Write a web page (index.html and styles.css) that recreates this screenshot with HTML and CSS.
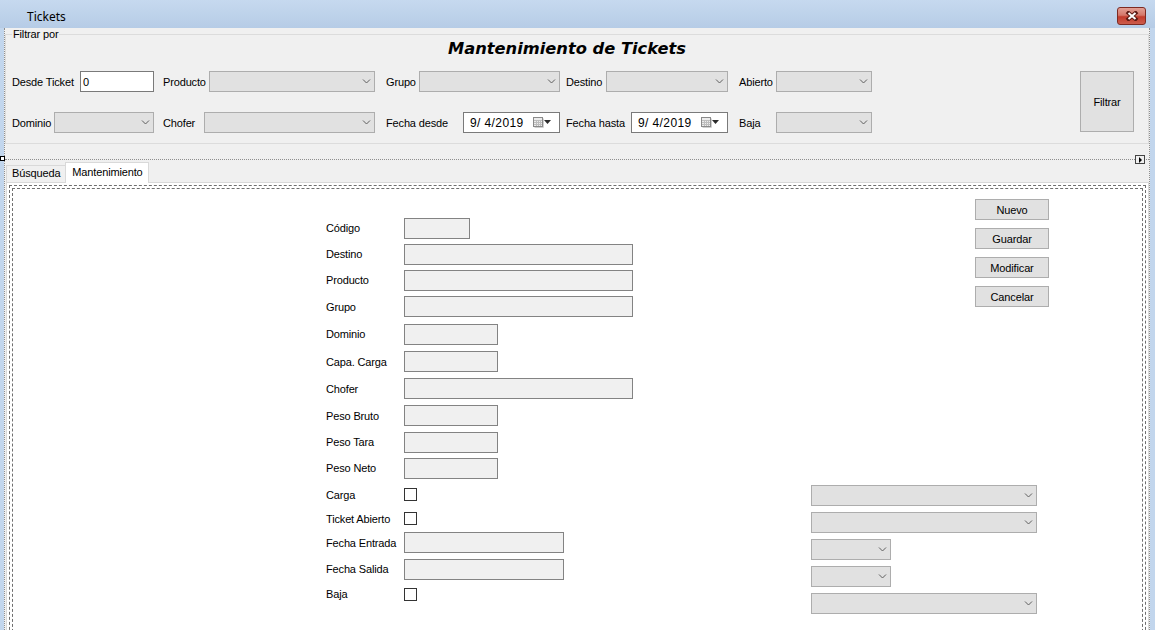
FILE: index.html
```html
<!DOCTYPE html>
<html lang="es">
<head>
    <meta charset="UTF-8">
    <title>Tickets</title>
    <link rel="stylesheet" href="styles.css">
</head>
<body>
    <div class="titlebar">
        <span class="title">Tickets</span>
        <button class="close-btn">
            <svg width="14" height="10" viewBox="0 0 14 10">
                <path d="M3.5 2 L10.5 8 M10.5 2 L3.5 8" stroke="#5b1a14" stroke-width="4" stroke-linecap="square"/>
                <path d="M3.5 2 L10.5 8 M10.5 2 L3.5 8" stroke="#fff" stroke-width="2"/>
            </svg>
        </button>
    </div>

    <div class="client">
        <fieldset class="filter">
            <legend>Filtrar por</legend>
            <h1 class="form-title">Mantenimiento de Tickets</h1>

            <div class="filter-body">
                <div class="filter-grid">
                    <div class="fcell"><span>Desde Ticket</span><input class="textbox w74" value="0"></div>
                    <div class="fcell"><span>Producto</span><div class="combo w166"><svg viewBox="0 0 9 5"><path d="M1 0.5 L4.5 4 L8 0.5"/></svg></div></div>
                    <div class="fcell"><span>Grupo</span><div class="combo w141"><svg viewBox="0 0 9 5"><path d="M1 0.5 L4.5 4 L8 0.5"/></svg></div></div>
                    <div class="fcell"><span>Destino</span><div class="combo w122"><svg viewBox="0 0 9 5"><path d="M1 0.5 L4.5 4 L8 0.5"/></svg></div></div>
                    <div class="fcell"><span>Abierto</span><div class="combo w96"><svg viewBox="0 0 9 5"><path d="M1 0.5 L4.5 4 L8 0.5"/></svg></div></div>

                    <div class="fcell"><span>Dominio</span><div class="combo w100"><svg viewBox="0 0 9 5"><path d="M1 0.5 L4.5 4 L8 0.5"/></svg></div></div>
                    <div class="fcell"><span>Chofer</span><div class="combo w171"><svg viewBox="0 0 9 5"><path d="M1 0.5 L4.5 4 L8 0.5"/></svg></div></div>
                    <div class="fcell"><span>Fecha desde</span>
                        <div class="datepick w97"><span class="date">9/ 4/2019</span>
                            <svg width="18" height="12" viewBox="0 0 18 12">
                                <rect x="0.5" y="0.5" width="9" height="9" fill="#ececec" stroke="#8a8a8a"/>
                                <path d="M1 3.5h8 M1 5.5h8 M1 7.5h8 M3.5 3v6 M5.5 3v6 M7.5 3v6" stroke="#bdbdbd"/>
                                <path d="M10.5 1.5v9 M1.5 10.5h9" stroke="#d0d0d0"/>
                                <path d="M11 3h7l-3.5 4z" fill="#2a2a2a"/>
                            </svg>
                        </div>
                    </div>
                    <div class="fcell"><span>Fecha hasta</span>
                        <div class="datepick w97"><span class="date">9/ 4/2019</span>
                            <svg width="18" height="12" viewBox="0 0 18 12">
                                <rect x="0.5" y="0.5" width="9" height="9" fill="#ececec" stroke="#8a8a8a"/>
                                <path d="M1 3.5h8 M1 5.5h8 M1 7.5h8 M3.5 3v6 M5.5 3v6 M7.5 3v6" stroke="#bdbdbd"/>
                                <path d="M10.5 1.5v9 M1.5 10.5h9" stroke="#d0d0d0"/>
                                <path d="M11 3h7l-3.5 4z" fill="#2a2a2a"/>
                            </svg>
                        </div>
                    </div>
                    <div class="fcell"><span>Baja</span><div class="combo w96"><svg viewBox="0 0 9 5"><path d="M1 0.5 L4.5 4 L8 0.5"/></svg></div></div>
                </div>
                <button class="btn btn-filter">Filtrar</button>
            </div>
        </fieldset>

        <div class="lower">
            <span class="grip-left"></span>
            <span class="grip-right"><i></i></span>

            <div class="tabs">
                <div class="tab-strip">
                    <div class="tab">Búsqueda</div>
                    <div class="tab active">Mantenimiento</div>
                </div>
                <div class="tab-page">
                    <div class="dash-outer">
                        <div class="dash-inner">
                            <div class="page-body">
                                <div class="form-grid">
                                    <span>Código</span><div class="field s"></div>
                                    <span>Destino</span><div class="field xl"></div>
                                    <span>Producto</span><div class="field xl"></div>
                                    <span>Grupo</span><div class="field xl"></div>
                                    <span>Dominio</span><div class="field m"></div>
                                    <span>Capa. Carga</span><div class="field m"></div>
                                    <span>Chofer</span><div class="field xl"></div>
                                    <span>Peso Bruto</span><div class="field m"></div>
                                    <span>Peso Tara</span><div class="field m"></div>
                                    <span>Peso Neto</span><div class="field m"></div>
                                    <span>Carga</span><div class="check"></div>
                                    <span>Ticket Abierto</span><div class="check"></div>
                                    <span>Fecha Entrada</span><div class="field l"></div>
                                    <span>Fecha Salida</span><div class="field l"></div>
                                    <span>Baja</span><div class="check"></div>
                                </div>

                                <div class="side">
                                    <div class="side-buttons">
                                        <button class="btn">Nuevo</button>
                                        <button class="btn">Guardar</button>
                                        <button class="btn">Modificar</button>
                                        <button class="btn">Cancelar</button>
                                    </div>
                                    <div class="side-combos">
                                        <div class="combo wide"><svg viewBox="0 0 9 5"><path d="M1 0.5 L4.5 4 L8 0.5"/></svg></div>
                                        <div class="combo wide"><svg viewBox="0 0 9 5"><path d="M1 0.5 L4.5 4 L8 0.5"/></svg></div>
                                        <div class="combo short"><svg viewBox="0 0 9 5"><path d="M1 0.5 L4.5 4 L8 0.5"/></svg></div>
                                        <div class="combo short"><svg viewBox="0 0 9 5"><path d="M1 0.5 L4.5 4 L8 0.5"/></svg></div>
                                        <div class="combo wide"><svg viewBox="0 0 9 5"><path d="M1 0.5 L4.5 4 L8 0.5"/></svg></div>
                                    </div>
                                </div>
                            </div>
                        </div>
                    </div>
                </div>
            </div>
        </div>
    </div>
</body>
</html>
```

FILE: styles.css
```css
* {
    box-sizing: border-box;
}

html, body {
    margin: 0;
    padding: 0;
}

body {
    width: 1155px;
    height: 630px;
    overflow: hidden;
    background: #c2d6ed;
    font-family: "Liberation Sans", Arial, sans-serif;
    font-size: 11px;
    letter-spacing: -0.15px;
    color: #000;
}

/* window title bar */
.titlebar {
    height: 28px;
    display: flex;
    align-items: flex-start;
    background: linear-gradient(#c6d9ef, #b6cce6);
}

.titlebar .title {
    font-family: "Noto Sans", sans-serif;
    font-size: 12px;
    letter-spacing: 0;
    line-height: 16px;
    margin: 9px 0 0 27px;
}

.close-btn {
    margin: 7px 9px 0 auto;
    width: 29px;
    height: 18px;
    padding: 0;
    border: 1px solid #7d2a22;
    border-radius: 3px;
    background: linear-gradient(#e2a095 0%, #d4776a 45%, #c23b2c 55%, #cc5c4c 100%);
    display: flex;
    align-items: center;
    justify-content: center;
}

/* client area */
.client {
    height: 602px;
    margin: 0 5px 0 4px;
    background: #f0f0f0;
    border-left: 1px dotted #8e8e8e;
    border-right: 1px dotted #8e8e8e;
}

.filter {
    margin: 0;
    min-width: 0;
    border: 1px solid #dcdcdc;
    padding: 0 14px 10px 6px;
}

.filter legend {
    padding: 0 1px;
    line-height: 13px;
    font-size: 11px;
}

.form-title {
    margin: -3px 0 0;
    padding-right: 12px;
    text-align: center;
    letter-spacing: 0;
    font: italic bold 16.3px/22px "DejaVu Sans", sans-serif;
}

.filter-body {
    display: flex;
    margin-top: 11px;
}

.filter-grid {
    display: grid;
    grid-template-columns: 151px 223px 180px 173px 133px;
    grid-template-rows: 21px 21px;
    row-gap: 20px;
}

.fcell {
    display: flex;
    align-items: center;
    justify-content: space-between;
    padding-right: 9px;
}

.fcell:nth-child(5n+2),
.fcell:nth-child(5n+4) {
    padding-right: 11px;
}

.fcell:nth-child(5n+3) {
    padding-right: 6px;
}

.fcell:nth-child(5n) {
    padding-right: 0;
}

.w74 { width: 74px; }
.w96 { width: 96px; }
.w97 { width: 97px; }
.w100 { width: 100px; }
.w122 { width: 122px; }
.w141 { width: 141px; }
.w166 { width: 166px; }
.w171 { width: 171px; }

.textbox {
    height: 21px;
    margin: 0;
    padding: 0 2px;
    border: 1px solid #7a7a7a;
    background: #fff;
    font: 11px "Liberation Sans", Arial, sans-serif;
    color: #000;
    outline: none;
}

.combo {
    height: 21px;
    background: #e1e1e1;
    border: 1px solid #adadad;
    display: flex;
    align-items: center;
    justify-content: flex-end;
    padding-right: 3px;
}

.combo svg {
    width: 9px;
    height: 5px;
    fill: none;
    stroke: #5f5f5f;
    stroke-width: 1;
}

.datepick {
    height: 21px;
    background: #fff;
    border: 1px solid #7a7a7a;
    display: flex;
    align-items: center;
    justify-content: space-between;
    padding: 0 8px 0 6px;
}

.datepick .date {
    font-size: 12px;
    letter-spacing: 0.4px;
    white-space: pre;
}

.btn {
    background: #e1e1e1;
    border: 1px solid #adadad;
    padding: 0;
    font: 11px "Liberation Sans", Arial, sans-serif;
    letter-spacing: -0.15px;
    color: #000;
}

.btn-filter {
    margin-left: auto;
    width: 54px;
    height: 61px;
}

/* lower panel with tabs */
.lower {
    position: relative;
    margin-top: 15px;
    border-top: 1px dotted #8e8e8e;
}

.grip-left {
    position: absolute;
    left: -5px;
    top: -4px;
    width: 5px;
    height: 5px;
    border: 1px solid #000;
    background: #fff;
}

.grip-right {
    position: absolute;
    right: 4px;
    top: -5px;
    width: 10px;
    height: 9px;
    border: 1px solid #444;
    background: #f0f0f0;
    display: flex;
    align-items: center;
    justify-content: center;
}

.grip-right i {
    width: 0;
    height: 0;
    border-left: 3px solid #000;
    border-top: 3px solid transparent;
    border-bottom: 3px solid transparent;
}

.tabs {
    margin-left: 1px;
}

.tab-strip {
    display: flex;
    align-items: flex-end;
    height: 22px;
}

.tab {
    height: 17px;
    line-height: 15px;
    padding: 0 5px;
    border: 1px solid #d9d9d9;
    border-bottom: 0;
    background: #f0f0f0;
}

.tab.active {
    position: relative;
    height: 21px;
    line-height: 19px;
    padding: 0 5px 0 6px;
    margin: 0 0 -1px -1px;
    background: #fff;
}

.tab-page {
    background: #fff;
    border: 1px solid #d9d9d9;
    padding: 2px;
}

.dash-outer {
    border: 1px dashed #6f6f6f;
    padding: 2px;
    height: 470px;
}

.dash-inner {
    border: 1px dashed #6f6f6f;
    height: 100%;
}

.page-body {
    display: flex;
    padding: 10px 0 0 313px;
}

.form-grid {
    width: 485px;
    margin-top: 16px;
    display: grid;
    grid-template-columns: 78px auto;
    grid-template-rows: 26px 26px 26px 27px 28px 27px 27px 27px 26px 26px 27px 21px 27px 26px 24px;
    align-items: center;
    justify-items: start;
}

.field {
    height: 21px;
    background: #f0f0f0;
    border: 1px solid #838383;
}

.field.s { width: 66px; }
.field.m { width: 94px; }
.field.l { width: 160px; }
.field.xl { width: 229px; }

.check {
    width: 13px;
    height: 13px;
    border: 1px solid #333;
    background: #fff;
}

.side {
    width: 237px;
    display: flex;
    flex-direction: column;
}

.side-buttons {
    margin-left: 164px;
    display: flex;
    flex-direction: column;
    gap: 8px;
}

.side-buttons .btn {
    width: 74px;
    height: 21px;
}

.side-combos {
    margin-top: 178px;
    display: flex;
    flex-direction: column;
    align-items: flex-start;
    gap: 6px;
}

.combo.wide { width: 226px; }
.combo.short { width: 80px; }
```
